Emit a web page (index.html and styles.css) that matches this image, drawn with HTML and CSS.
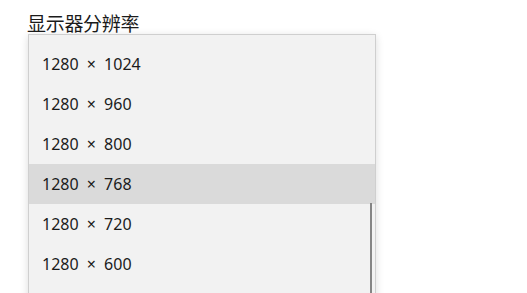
FILE: index.html
```html
<!DOCTYPE html>
<html lang="zh">
<head>
<meta charset="utf-8">
<link rel="stylesheet" href="styles.css">
</head>
<body>
<div class="page">
  <div class="label">显示器分辨率</div>
  <div class="dropdown">
    <ul class="list">
      <li class="item">1280 × 1024</li>
      <li class="item">1280 × 960</li>
      <li class="item">1280 × 800</li>
      <li class="item selected">1280 × 768</li>
      <li class="item">1280 × 720</li>
      <li class="item">1280 × 600</li>
    </ul>
    <div class="thumb"></div>
  </div>
</div>
</body>
</html>
```
FILE: styles.css
```css
html, body {
  margin: 0;
  padding: 0;
  background: #ffffff;
  height: 100%;
  overflow: hidden;
}
.page {
  padding: 11px 0 0 27px;
  font-family: "Noto Sans", "Noto Sans CJK SC", sans-serif;
  color: #1b1b1b;
}
.label {
  font-family: "Noto Sans CJK SC", sans-serif;
  font-size: 19px;
  line-height: 23px;
  height: 23px;
  letter-spacing: -0.3px;
}
.dropdown {
  position: relative;
  margin-left: 1px;
  width: 346px;
  height: 320px;
  background: #f2f2f2;
  border: 1px solid #cfcfcf;
  box-shadow: 0 2px 8px rgba(0, 0, 0, 0.14);
}
.list {
  list-style: none;
  margin: 0;
  padding: 9px 0 0 0;
}
.item {
  height: 40px;
  line-height: 40px;
  padding-left: 13px;
  font-size: 16px;
  word-spacing: 4px;
  color: #1b1b1b;
}
.item.selected {
  background: #dadada;
}
.thumb {
  position: absolute;
  left: 341px;
  top: 168px;
  width: 2px;
  height: 200px;
  background: #858585;
}
```
